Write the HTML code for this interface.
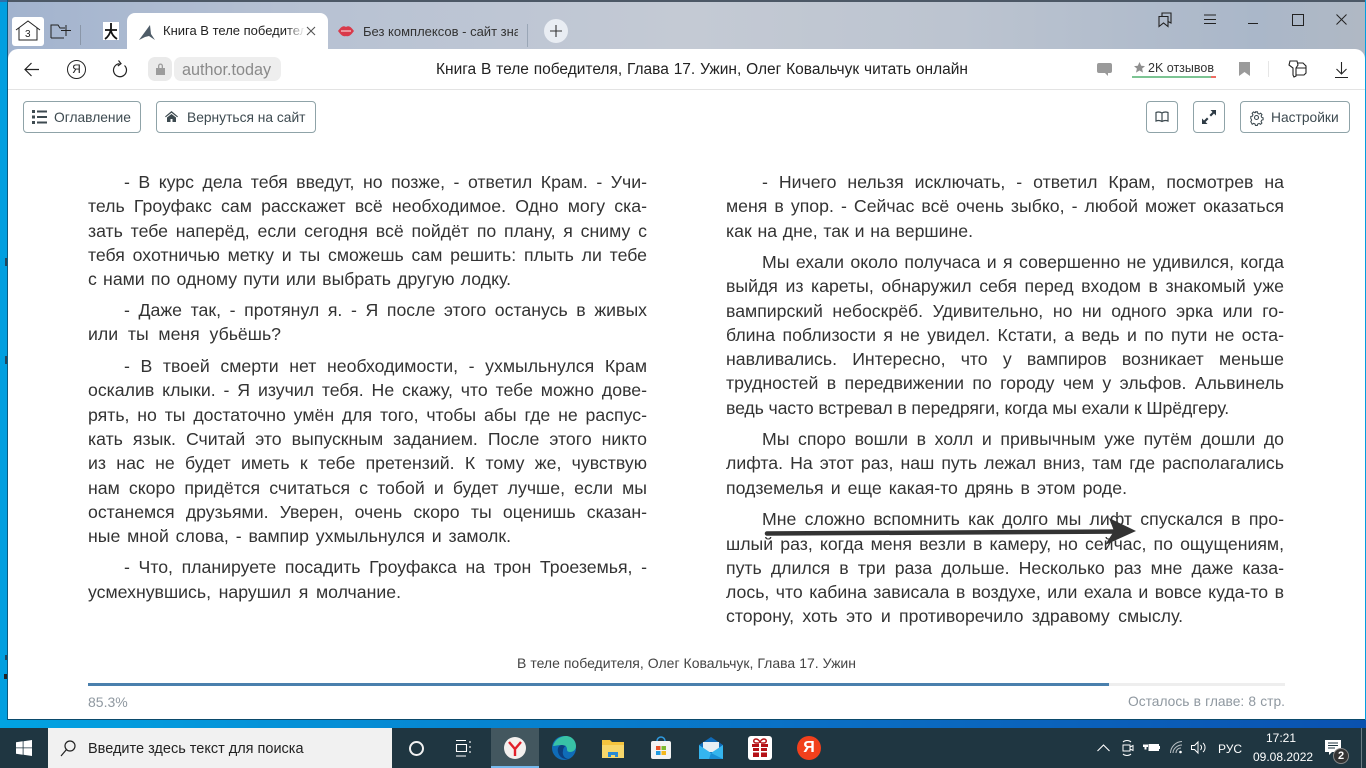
<!DOCTYPE html>
<html lang="ru"><head><meta charset="utf-8"><title>Книга В теле победителя</title>
<style>
html,body{margin:0;padding:0;width:1366px;height:768px;overflow:hidden;background:#019fe0;font-family:"Liberation Sans",sans-serif}
.a{position:absolute}
#win{left:7px;top:0;width:1358px;height:720px;background:#fff;border-left:1px solid #0b5a80;border-bottom:1px solid #0b4a6c;box-sizing:border-box}
#title{left:8px;top:0;width:1357px;height:60px;background:linear-gradient(90deg,#a2b3ce 0%,#b6c1d3 20%,#c4cad4 50%,#bcc4d0 70%,#aab7c9 92%,#b0b8c4 100%);border-top:2px solid #4c5866;box-sizing:border-box}
#chrome{left:8px;top:49px;width:1357px;height:41px;background:#fff;border-radius:10px 10px 0 0;border-bottom:1px solid #e3e3e3;box-sizing:border-box}
#tab{left:127px;top:13px;width:201px;height:37px;background:#fff;border-radius:8px 8px 0 0}
.t{position:absolute;white-space:nowrap;font-size:13px;line-height:16px;color:#222}
.btn{position:absolute;top:101px;height:32px;box-sizing:border-box;border:1px solid #8fa3a8;border-radius:4px;background:#fff;color:#3d4a50;font-size:13.8px;line-height:31px;white-space:nowrap}
.btn span{position:absolute;top:0}
.l{position:absolute;height:24px;line-height:25px;font-size:17.7px;color:#333;text-align:justify;text-align-last:justify;white-space:nowrap;overflow:hidden}
svg{position:absolute;overflow:visible}
#tb{left:0;top:728px;width:1366px;height:40px;background:#1f3641}
</style></head><body>
<div class="a" id="win"></div>
<div class="a" id="title"></div>
<div class="a" id="tab"></div>
<div class="a" id="chrome"></div>

<!-- tab strip -->
<div class="a" style="left:12px;top:17px;width:32px;height:29px;background:#fff;border-radius:3px"></div>
<svg style="left:15px;top:20px" width="26" height="22" fill="none" stroke="#222" stroke-width="1"><path d="M1 10L13 1l12 9M4 8v12h18V8"/><text x="10" y="17" font-size="10" fill="#222" stroke="none" font-family="Liberation Sans">3</text></svg>
<svg style="left:50px;top:22px" width="22" height="18" fill="none" stroke="#222" stroke-width="1"><path d="M1 16V3h7l2 3h5M1 16h13M16 3v11M11 8.500h10"/></svg>
<div class="a" style="left:80px;top:25px;width:1px;height:20px;background:#8a96a8"></div>
<div class="a" style="left:103px;top:22px;width:16px;height:18px;background:#fff"></div>
<svg style="left:103px;top:22px" width="16" height="18" fill="none" stroke="#111" stroke-width="1.800"><path d="M8 1v6M2 8h12M8 7C7 12 5 15 2 17M8 9c1 4 3 6 6 8"/></svg>
<svg style="left:138px;top:24px" width="18" height="17"><path d="M1 16L12 1l1 9 4 6-6-4-4 1z" fill="#4e5c68"/></svg>
<div class="t" style="left:163px;top:23px;width:141px;overflow:hidden;font-size:13px">Книга В теле победителя</div>
<div class="a" style="left:285px;top:20px;width:20px;height:24px;background:linear-gradient(90deg,rgba(255,255,255,0),#fff)"></div>
<svg style="left:306px;top:26px" width="10" height="10" stroke="#555" stroke-width="1.100"><path d="M1 1l8 8M9 1l-8 8"/></svg>
<svg style="left:338px;top:25px" width="16" height="12"><path d="M0 6C3 2 5 0 8 2c3-2 5 0 8 4-3 4-5 6-8 5-3 1-5-1-8-5z" fill="#d9394a"/><path d="M3 6h10" stroke="#f3b0b6" stroke-width="1.500"/></svg>
<div class="t" style="left:363px;top:24px;width:155px;overflow:hidden;color:#333">Без комплексов - сайт зна</div>
<div class="a" style="left:527px;top:24px;width:1px;height:23px;background:#9aa6b6"></div>
<div class="a" style="left:544px;top:19px;width:24px;height:24px;border-radius:50%;background:#e9edf3"></div>
<svg style="left:550px;top:25px" width="12" height="12" stroke="#333" stroke-width="1.100"><path d="M6 0v12M0 6h12"/></svg>

<!-- window controls -->
<svg style="left:1158px;top:12px" width="16" height="16" fill="none" stroke="#222" stroke-width="1.100"><path d="M1 4.500h9v10L5.500 11 1 14.500zM4 4.500V1h9v10l-3-1.500"/></svg>
<svg style="left:1204px;top:14px" width="12" height="10" stroke="#222"><path d="M0 1h12M0 5.500h12M0 9.500h12"/></svg>
<div class="a" style="left:1248px;top:23px;width:10px;height:1px;background:#222"></div>
<div class="a" style="left:1292px;top:14px;width:10px;height:10px;border:1px solid #222"></div>
<svg style="left:1336px;top:14px" width="11" height="11" stroke="#222"><path d="M0.500 0.500l10 10M10.500 0.500l-10 10"/></svg>

<!-- address bar -->
<svg style="left:24px;top:62px" width="16" height="15" fill="none" stroke="#222" stroke-width="1.200"><path d="M15 7.500H1M7.500 1L1 7.500 7.500 14"/></svg>
<div class="a" style="left:67px;top:60px;width:17px;height:17px;border:1.200px solid #222;border-radius:50%;font-size:12px;line-height:17px;text-align:center;color:#222">Я</div>
<svg style="left:112px;top:60px" width="16" height="18" fill="none" stroke="#222" stroke-width="1.200"><path d="M12.500 5.500a6.500 6.500 0 1 1-5-1.800M6.500 0.500L9 3.600 5.800 6"/></svg>
<div class="a" style="left:148px;top:57px;width:24px;height:24px;border-radius:7px;background:#eaeaea"></div>
<svg style="left:155px;top:62px" width="11" height="14" fill="#9c9c9c"><path d="M1 6h9v7H1zM3 6V4a2.500 2.500 0 0 1 5 0v2H6.700V4a1.200 1.200 0 0 0-2.400 0v2z"/></svg>
<div class="a" style="left:174px;top:57px;width:107px;height:24px;border-radius:7px;background:#eee;color:#8a8a8a;font-size:16.200px;line-height:26px;text-indent:8px">author.today</div>
<div class="t" style="left:436px;top:62px;width:532px;font-size:15.500px;color:#222;text-align:justify;text-align-last:justify">Книга В теле победителя, Глава 17. Ужин, Олег Ковальчук читать онлайн</div>
<svg style="left:1097px;top:63px" width="15" height="13" fill="#9a9a9a"><path d="M2 0h11a2 2 0 0 1 2 2v6a2 2 0 0 1-2 2h-2v3l-3-3H2a2 2 0 0 1-2-2V2a2 2 0 0 1 2-2z"/></svg>
<svg style="left:1134px;top:62px" width="11" height="11" fill="#8f8f8f"><path d="M5.500 0l1.700 3.700 3.800.4-2.900 2.500.9 4L5.500 8.500 2 10.600l.9-4L0 4.100l3.800-.4z"/></svg>
<div class="t" style="left:1148px;top:60px;font-size:12.500px;color:#333">2K отзывов</div>
<div class="a" style="left:1132px;top:76px;width:79px;height:2px;background:#7cc493"></div>
<div class="a" style="left:1211px;top:76px;width:5px;height:2px;background:#ee6d63"></div>
<svg style="left:1239px;top:62px" width="11" height="14" fill="#9a9a9a"><path d="M0 0h11v14L5.500 10 0 14z"/></svg>
<div class="a" style="left:1268px;top:61px;width:1px;height:16px;background:#e6e6e6"></div>
<svg style="left:1288px;top:60px" width="19" height="18" fill="none" stroke="#222" stroke-width="1.100"><path d="M2 1h7l1 4-2 3v8l-2 1-1-2V8L1 5zM9 3h6l3 3v7l-2 2H8M8 8h10"/></svg>
<svg style="left:1335px;top:62px" width="13" height="16" fill="none" stroke="#222" stroke-width="1.100"><path d="M6.500 0v12M1.500 7l5 5 5-5M0 15.500h13"/></svg>

<!-- toolbar -->
<div class="btn" style="left:23px;width:118px"><span style="left:30px">Оглавление</span></div>
<svg style="left:32px;top:110px" width="15" height="14" fill="#3d4a50"><path d="M0 0h3v3H0zM5 .5h10v2H5zM0 5.500h3v3H0zM5 6h10v2H5zM0 11h3v3H0zM5 11.500h10v2H5z"/></svg>
<div class="btn" style="left:156px;width:160px"><span style="left:30px">Вернуться на сайт</span></div>
<svg style="left:165px;top:111px" width="13" height="11" fill="#3d4a50"><path d="M6.500 0L13 5.500l-.8.800L6.500 1.800.8 6.300 0 5.500zM2 6.500l4.500-3.500L11 6.500V11H7.500V8h-2v3H2z"/></svg>
<div class="btn" style="left:1146px;width:32px"></div>
<svg style="left:1155px;top:111px" width="14" height="12" fill="none" stroke="#3d4a50" stroke-width="1.200"><path d="M7 2C5 .8 3 .8 1 1.500v8.500c2-.7 4-.7 6 .5 2-1.200 4-1.200 6-.5V1.500C11 .8 9 .8 7 2zM7 2v8.500"/></svg>
<div class="btn" style="left:1193px;width:32px"></div>
<svg style="left:1202px;top:110px" width="14" height="14" fill="#2d3a44"><path d="M14 0v5.500l-2-2L9 6.500 7.500 5l3-3-2-2zM0 14V8.500l2 2L5 7.500 6.500 9l-3 3 2 2z"/></svg>
<div class="btn" style="left:1240px;width:110px"><span style="left:30px">Настройки</span></div>
<svg style="left:1250px;top:111px" width="13" height="13" fill="none" stroke="#3d4a50" stroke-width="1.100"><circle cx="6.500" cy="6.500" r="2"/><path d="M5.500 .5h2l.4 1.700 1.500.7 1.500-.9 1.400 1.400-.9 1.500.6 1.500 1.500.5v2l-1.500.4-.7 1.500.9 1.500-1.400 1.400-1.500-.9-1.500.6-.4 1.500h-2l-.4-1.500-1.500-.7-1.500.9L.5 10.800l.9-1.500-.7-1.500L.5 7.500v-2l1.700-.4.600-1.500-.9-1.500L3.300.7l1.500.9 1-.4z" transform="translate(.3 .3) scale(.95)"/></svg>

<!-- left column -->
<div class="l" style="left:124px;top:170px;width:523px">- В курс дела тебя введут, но позже, - ответил Крам. - Учи-</div>
<div class="l" style="left:88px;top:194px;width:559px">тель Гроуфакс сам расскажет всё необходимое. Одно могу ска-</div>
<div class="l" style="left:88px;top:219px;width:559px">зать тебе наперёд, если сегодня всё пойдёт по плану, я сниму с</div>
<div class="l" style="left:88px;top:243px;width:559px">тебя охотничью метку и ты сможешь сам решить: плыть ли тебе</div>
<div class="l" style="left:88px;top:267px;width:423px">с нами по одному пути или выбрать другую лодку.</div>
<div class="l" style="left:124px;top:298px;width:523px">- Даже так, - протянул я. - Я после этого останусь в живых</div>
<div class="l" style="left:88px;top:322px;width:193px">или ты меня убьёшь?</div>
<div class="l" style="left:124px;top:354px;width:523px">- В твоей смерти нет необходимости, - ухмыльнулся Крам</div>
<div class="l" style="left:88px;top:378px;width:559px">оскалив клыки. - Я изучил тебя. Не скажу, что тебе можно дове-</div>
<div class="l" style="left:88px;top:403px;width:559px">рять, но ты достаточно умён для того, чтобы абы где не распус-</div>
<div class="l" style="left:88px;top:427px;width:559px">кать язык. Считай это выпускным заданием. После этого никто</div>
<div class="l" style="left:88px;top:451px;width:559px">из нас не будет иметь к тебе претензий. К тому же, чувствую</div>
<div class="l" style="left:88px;top:476px;width:559px">нам скоро придётся считаться с тобой и будет лучше, если мы</div>
<div class="l" style="left:88px;top:500px;width:559px">останемся друзьями. Уверен, очень скоро ты оценишь сказан-</div>
<div class="l" style="left:88px;top:524px;width:423px">ные мной слова, - вампир ухмыльнулся и замолк.</div>
<div class="l" style="left:124px;top:555px;width:523px">- Что, планируете посадить Гроуфакса на трон Троеземья, -</div>
<div class="l" style="left:88px;top:580px;width:313px">усмехнувшись, нарушил я молчание.</div>

<!-- right column -->
<div class="l" style="left:762px;top:170px;width:522px">- Ничего нельзя исключать, - ответил Крам, посмотрев на</div>
<div class="l" style="left:726px;top:194px;width:558px">меня в упор. - Сейчас всё очень зыбко, - любой может оказаться</div>
<div class="l" style="left:726px;top:219px;width:247px">как на дне, так и на вершине.</div>
<div class="l" style="left:762px;top:250px;width:522px">Мы ехали около получаса и я совершенно не удивился, когда</div>
<div class="l" style="left:726px;top:274px;width:558px">выйдя из кареты, обнаружил себя перед входом в знакомый уже</div>
<div class="l" style="left:726px;top:299px;width:558px">вампирский небоскрёб. Удивительно, но ни одного эрка или го-</div>
<div class="l" style="left:726px;top:323px;width:558px">блина поблизости я не увидел. Кстати, а ведь и по пути не оста-</div>
<div class="l" style="left:726px;top:347px;width:558px">навливались. Интересно, что у вампиров возникает меньше</div>
<div class="l" style="left:726px;top:371px;width:558px">трудностей в передвижении по городу чем у эльфов. Альвинель</div>
<div class="l" style="left:726px;top:396px;width:502px;letter-spacing:-.12px">ведь часто встревал в передряги, когда мы ехали к Шрёдгеру.</div>
<div class="l" style="left:762px;top:427px;width:522px">Мы споро вошли в холл и привычным уже путём дошли до</div>
<div class="l" style="left:726px;top:451px;width:558px">лифта. На этот раз, наш путь лежал вниз, там где располагались</div>
<div class="l" style="left:726px;top:476px;width:401px">подземелья и еще какая-то дрянь в этом роде.</div>
<div class="l" style="left:762px;top:507px;width:522px">Мне сложно вспомнить как долго мы лифт спускался в про-</div>
<div class="l" style="left:726px;top:532px;width:558px">шлый раз, когда меня везли в камеру, но сейчас, по ощущениям,</div>
<div class="l" style="left:726px;top:556px;width:558px">путь длился в три раза дольше. Несколько раз мне даже каза-</div>
<div class="l" style="left:726px;top:580px;width:558px">лось, что кабина зависала в воздухе, или ехала и вовсе куда-то в</div>
<div class="l" style="left:726px;top:604px;width:457px">сторону, хоть это и противоречило здравому смыслу.</div>

<!-- arrow -->
<svg style="left:764px;top:518px" width="375" height="28"><path d="M3 15.500L360 13.500" stroke="#333" stroke-width="4.500" stroke-linecap="round"/><path d="M345 0L372 13 341 27 350 13z" fill="#333"/></svg>

<!-- footer -->
<div class="t" style="left:517px;top:655px;width:339px;font-size:14px;color:#444;text-align:justify;text-align-last:justify">В теле победителя, Олег Ковальчук, Глава 17. Ужин</div>
<div class="a" style="left:88px;top:683px;width:1197px;height:3px;background:#eee"></div>
<div class="a" style="left:88px;top:683px;width:1021px;height:3px;background:#4a80ad"></div>
<div class="t" style="left:88px;top:694px;font-size:14px;color:#8f98a0">85.3%</div>
<div class="t" style="left:1128px;top:694px;width:157px;font-size:13.800px;color:#8f98a0;text-align:justify;text-align-last:justify">Осталось в главе: 8 стр.</div>

<!-- desktop slivers -->
<div class="a" style="left:0;top:0;width:7px;height:2px;background:#2d6fa8"></div>
<div class="a" style="left:5px;top:258px;width:2px;height:8px;background:#23465c"></div>
<div class="a" style="left:5px;top:356px;width:2px;height:8px;background:#23465c"></div>
<div class="a" style="left:5px;top:655px;width:2px;height:5px;background:#23465c"></div>
<div class="a" style="left:4px;top:674px;width:3px;height:5px;background:#222"></div>
<div class="a" style="left:0;top:720px;width:1366px;height:8px;background:linear-gradient(90deg,#01a3e2,#0a6fc4 60%,#0a52b0)"></div>

<!-- taskbar -->
<div class="a" id="tb"></div>
<svg style="left:16px;top:740px" width="16" height="16" fill="#fff"><path d="M0 2.300L6.700 1.300V7.500H0zM7.500 1.200L16 0V7.500H7.500zM0 8.300H6.700V14.700L0 13.700zM7.500 8.300H16V16L7.500 14.800z"/></svg>
<div class="a" style="left:48px;top:728px;width:344px;height:40px;background:#f1f1f1"></div>
<svg style="left:60px;top:740px" width="16" height="17" fill="none" stroke="#222" stroke-width="1.200"><circle cx="10" cy="6" r="5"/><path d="M6.500 9.500L1 16"/></svg>
<div class="t" style="left:88px;top:741px;font-size:14.500px;color:#222">Введите здесь текст для поиска</div>
<div class="a" style="left:409px;top:741px;width:11px;height:11px;border:2px solid #f2f2f2;border-radius:50%"></div>
<svg style="left:456px;top:740px" width="16" height="17" fill="none" stroke="#fff" stroke-width="1.100"><path d="M0 .5h10M0 16h10M.5 4.500h10v7h-10zM14 1v2M14 6v2M14 11v2"/></svg>
<div class="a" style="left:491px;top:728px;width:48px;height:40px;background:#43575f"></div>
<div class="a" style="left:491px;top:766px;width:48px;height:2px;background:#76b9ed"></div>
<div class="a" style="left:504px;top:737px;width:22px;height:22px;border-radius:50%;background:#f4f0ee"></div>
<svg style="left:508px;top:741px" width="14" height="15" fill="none" stroke="#e2202a" stroke-width="2.400"><path d="M1 1l6 7 6-7M7 8v7"/></svg>
<svg style="left:552px;top:736px" width="24" height="24"><circle cx="12" cy="12" r="12" fill="#0f6cb8"/><path d="M1 10C3 3 9 0 14 0c6 0 10 5 10 10 0 4-3 6-6 6-3 0-3-2-3-3 0-3-3-4-5-4-4 0-7 1-9 1z" fill="#38c2a6"/><path d="M10 9c-3 0-5 3-4 7 1 5 6 8 11 7-5 0-7-5-6-8 0-3 2-5 3-5z" fill="#0d3f7e"/></svg>
<svg style="left:602px;top:738px" width="22" height="21"><path d="M0 2h8l2 2h12v15H0z" fill="#f4c43e"/><path d="M0 7h22v13H0z" fill="#f7d76b"/><path d="M6 19v-5h10v5h-3v-2H9v2z" fill="#2a8ad4"/></svg>
<svg style="left:650px;top:736px" width="22" height="24"><path d="M7 5a4 4 0 0 1 8 0" fill="none" stroke="#2f9be0" stroke-width="1.500"/><rect x="1" y="5" width="20" height="18" rx="2" fill="#f3f3f3"/><path d="M6 10h4.500v4H6z" fill="#e8532a"/><path d="M11.500 10H16v4h-4.500z" fill="#7db92f"/><path d="M6 15h4.500v4H6z" fill="#1f9ae0"/><path d="M11.500 15H16v4h-4.500z" fill="#f5b81c"/></svg>
<svg style="left:699px;top:737px" width="24" height="22"><path d="M0 8L12 0l12 8v14H0z" fill="#0f6ab8"/><path d="M4 5h16v10H4z" fill="#e6eef4"/><path d="M0 8l12 8 12-8v14H0z" fill="#35b5ee"/><path d="M12 16l12 6H10z" fill="#1a8fd6"/></svg>
<div class="a" style="left:748px;top:736px;width:24px;height:24px;background:#fff;border-radius:3px"></div>
<svg style="left:751px;top:738px" width="18" height="20"><path d="M5 1c2 0 4 2 4 4 0-2 2-4 4-4 3 0 3 4 0 4H5C2 5 2 1 5 1z" fill="none" stroke="#b51217" stroke-width="1.500"/><path d="M1 6h16v3H1zM2 10h14v9H2z" fill="#b51217"/><path d="M8 5h2v15H8zM1 13h16v1.500H1z" fill="#fff"/></svg>
<div class="a" style="left:797px;top:736px;width:24px;height:24px;border-radius:50%;background:#f2401c;color:#fff;font-size:16px;font-weight:bold;line-height:24px;text-align:center">Я</div>

<!-- tray -->
<svg style="left:1097px;top:744px" width="13" height="8" fill="none" stroke="#fff" stroke-width="1.100"><path d="M.5 7L6.500 1l6 6"/></svg>
<svg style="left:1122px;top:739px" width="12" height="18" fill="none" stroke="#fff"><path d="M1 3c2-2 6-2 8 0M1 15c2 2 6 2 8 0M1 6h7v6H1zM8 8l3-1.500v5L8 10"/></svg>
<svg style="left:1143px;top:742px" width="17" height="11" fill="#fff"><path d="M5.500 2h10.500v7H5.500z"/><path d="M1 0v2.500M4 0v2.500M0 2.500h5v2.500H3.500v2.500H1.500V5H0z"/><path d="M16 4h1v3h-1z"/></svg>
<svg style="left:1170px;top:741px" width="13" height="13" fill="none" stroke="#b9c0c4"><path d="M.5 12C.5 6 6 .5 12 .5M3 12c0-4 4-8 9-8M6 12c0-3 2-5 5-5"/><circle cx="10.500" cy="11" r="1.300" fill="#fff" stroke="none"/></svg>
<svg style="left:1191px;top:741px" width="16" height="13" fill="none" stroke="#fff"><path d="M.5 4.500h3L7 1v11L3.500 8.500h-3zM9.500 4a3.500 3.500 0 0 1 0 5M12 2a6 6 0 0 1 0 9"/></svg>
<div class="t" style="left:1218px;top:741px;font-size:12px;color:#fff">РУС</div>
<div class="t" style="left:1266px;top:730px;font-size:12px;color:#fff">17:21</div>
<div class="t" style="left:1253px;top:749px;font-size:12px;color:#fff">09.08.2022</div>
<svg style="left:1325px;top:740px" width="16" height="16" fill="#fff"><path d="M0 0h16v12H7l-3 3v-3H0z"/><path d="M3 3h10M3 5.500h10M3 8h7" stroke="#1f3641"/></svg>
<div class="a" style="left:1333px;top:748px;width:14px;height:14px;border-radius:50%;background:#333;border:1.500px solid #888;color:#fff;font-size:11px;font-weight:bold;line-height:14px;text-align:center">2</div>
<div class="a" style="left:1361px;top:728px;width:1px;height:40px;background:#6b7c84"></div>
</body></html>
